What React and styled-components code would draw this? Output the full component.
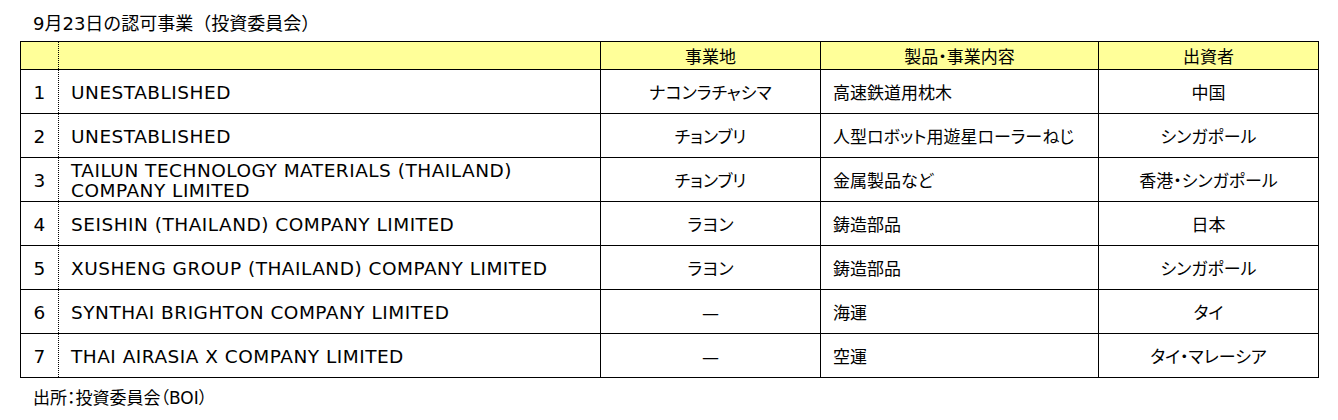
import React from 'react';
import styled, { createGlobalStyle } from 'styled-components';

const GlobalStyle = createGlobalStyle`
	body {
		margin: 0;
		background: #ffffff;
		font-family: "DejaVu Sans", "Noto Sans CJK JP", sans-serif;
		color: #000000;
	}
`

const Page = styled.div`
	padding: 12px 20px 0 20px;
	width: 1298px;
`

const Caption = styled.p`
	margin: 0 0 5px 13px;
	font-size: 18px;
	line-height: 24px;
`

const Table = styled.table`
	border-collapse: collapse;
	table-layout: fixed;
	width: 1298px;
	font-size: 17px;
	font-feature-settings: "palt";
`

const HeadCell = styled.th`
	background: #ffff99;
	border: 1px solid #000000;
	height: 27px;
	padding: 0;
	font-weight: normal;
	text-align: center;
	border-left-style: ${props => props.dotted ? 'dotted' : 'solid'};
	border-right-style: ${props => props.dottedRight ? 'dotted' : 'solid'};
`

const Cell = styled.td`
	border: 1px solid #000000;
	height: 40px;
	padding: 3px ${props => props.align === 'left' ? '12px' : '4px'} 0;
	text-align: ${props => props.align || 'center'};
	line-height: 20px;
	vertical-align: middle;
	border-left-style: ${props => props.dotted ? 'dotted' : 'solid'};
	border-right-style: ${props => props.dottedRight ? 'dotted' : 'solid'};
`

const NameCell = styled(Cell)`
	font-size: 18.5px;
	letter-spacing: ${props => props.wide ? '0.5px' : '0'};
`

const Source = styled.p`
	margin: 8px 0 0 13px;
	font-size: 17px;
	line-height: 24px;
	font-feature-settings: "palt";
`

const rows = [
	{ name: 'UNESTABLISHED', place: 'ナコンラチャシマ', product: '高速鉄道用枕木', investor: '中国' },
	{ name: 'UNESTABLISHED', place: 'チョンブリ', product: '人型ロボット用遊星ローラーねじ', investor: 'シンガポール' },
	{ name: ['TAILUN TECHNOLOGY MATERIALS (THAILAND)', 'COMPANY LIMITED'], place: 'チョンブリ', product: '金属製品など', investor: '香港・シンガポール' },
	{ name: 'SEISHIN (THAILAND) COMPANY LIMITED', place: 'ラヨン', product: '鋳造部品', investor: '日本' },
	{ name: 'XUSHENG GROUP (THAILAND) COMPANY LIMITED', place: 'ラヨン', product: '鋳造部品', investor: 'シンガポール' },
	{ name: 'SYNTHAI BRIGHTON COMPANY LIMITED', place: '—', product: '海運', investor: 'タイ' },
	{ name: 'THAI AIRASIA X COMPANY LIMITED', place: '—', product: '空運', investor: 'タイ・マレーシア' },
]

const App = () => (
	<Page>
		<GlobalStyle />
		<Caption>9月23日の認可事業（投資委員会）</Caption>
		<Table>
			<colgroup>
				<col style={{ width: 38 }} />
				<col style={{ width: 542 }} />
				<col style={{ width: 220 }} />
				<col style={{ width: 278 }} />
				<col style={{ width: 220 }} />
			</colgroup>
			<thead>
				<tr>
					<HeadCell dottedRight></HeadCell>
					<HeadCell dotted></HeadCell>
					<HeadCell>事業地</HeadCell>
					<HeadCell>製品・事業内容</HeadCell>
					<HeadCell>出資者</HeadCell>
				</tr>
			</thead>
			<tbody>
				{rows.map((row, i) => (
					<tr key={i}>
						<NameCell dottedRight>{i + 1}</NameCell>
						<NameCell dotted wide align="left">
							{Array.isArray(row.name)
								? row.name.map((line, j) => <div key={j}>{line}</div>)
								: row.name}
						</NameCell>
						<Cell>{row.place}</Cell>
						<Cell align="left">{row.product}</Cell>
						<Cell>{row.investor}</Cell>
					</tr>
				))}
			</tbody>
		</Table>
		<Source>出所：投資委員会（BOI）</Source>
	</Page>
)

export default App;
